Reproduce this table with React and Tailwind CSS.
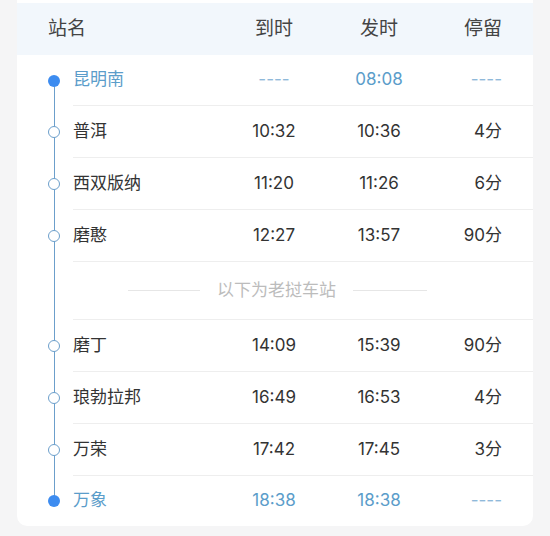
import React from "react";

const rows = [
  { name: "昆明南", arr: "----", dep: "08:08", stop: "----", hl: true, first: true },
  { name: "普洱", arr: "10:32", dep: "10:36", stop: "4分" },
  { name: "西双版纳", arr: "11:20", dep: "11:26", stop: "6分" },
  { name: "磨憨", arr: "12:27", dep: "13:57", stop: "90分" },
  { divider: true },
  { name: "磨丁", arr: "14:09", dep: "15:39", stop: "90分" },
  { name: "琅勃拉邦", arr: "16:49", dep: "16:53", stop: "4分" },
  { name: "万荣", arr: "17:42", dep: "17:45", stop: "3分" },
  { name: "万象", arr: "18:38", dep: "18:38", stop: "----", hl: true, last: true },
];

const font = { fontFamily: 'Inter, "Noto Sans CJK SC", sans-serif' };

function Dot({ filled }) {
  return filled ? (
    <div className="ml-[31px] w-[12px] h-[12px] rounded-full bg-[#3d8cf0] relative z-10" />
  ) : (
    <div className="ml-[31px] w-[12px] h-[12px] rounded-full bg-white border-[1.5px] border-[#6c9fcb] relative z-10" />
  );
}

export default function App() {
  return (
    <div className="w-[550px] h-[536px] bg-[#f5f5f6] overflow-hidden" style={font}>
      <div className="ml-[17px] w-[516px] bg-white rounded-b-[10px] pt-[3px]">
        <div className="h-[52px] bg-[#f2f7fc] flex items-center pl-[31px] text-[19px] text-[#444]">
          <div className="w-[194px]">站名</div>
          <div className="w-[64px] text-center">到时</div>
          <div className="w-[41px]" />
          <div className="w-[64px] text-center">发时</div>
          <div className="flex-1 text-right pr-[31px]">停留</div>
        </div>
        <div className="relative">
          <div className="absolute left-[36.5px] top-[25px] bottom-[25px] w-[1.5px] bg-[#6c9fcb]" />
          {rows.map((r, i) =>
            r.divider ? (
              <div key={i} className="flex h-[58px]">
                <div className="w-[56px]" />
                <div className="flex-1 border-b border-[#eeeeee] flex items-center">
                  <div className="ml-[55px] w-[72px] h-px bg-[#e6e6e6]" />
                  <div className="mx-[17px] text-[17px] text-[#bcbcbc]">以下为老挝车站</div>
                  <div className="w-[74px] h-px bg-[#e6e6e6]" />
                </div>
              </div>
            ) : (
              <div key={i} className={`flex items-center ${r.last ? "h-[50px]" : r.first ? "h-[51px]" : "h-[52px]"}`}>
                <div className="w-[56px] flex items-center">
                  <Dot filled={r.hl} />
                </div>
                <div
                  className={`flex-1 h-full flex items-center text-[17px] ${r.last ? "" : "border-b border-[#eeeeee]"} ${r.hl ? "text-[#5b9dca]" : "text-[#333333]"}`}
                >
                  <div className="w-[169px]">{r.name}</div>
                  <div className={`w-[64px] text-center ${r.arr === "----" ? "text-[#8fb9da]" : ""}`}>{r.arr}</div>
                  <div className="w-[41px]" />
                  <div className="w-[64px] text-center">{r.dep}</div>
                  <div className={`flex-1 text-right pr-[31px] ${r.stop === "----" ? "text-[#8fb9da]" : ""}`}>{r.stop}</div>
                </div>
              </div>
            )
          )}
        </div>
      </div>
    </div>
  );
}
